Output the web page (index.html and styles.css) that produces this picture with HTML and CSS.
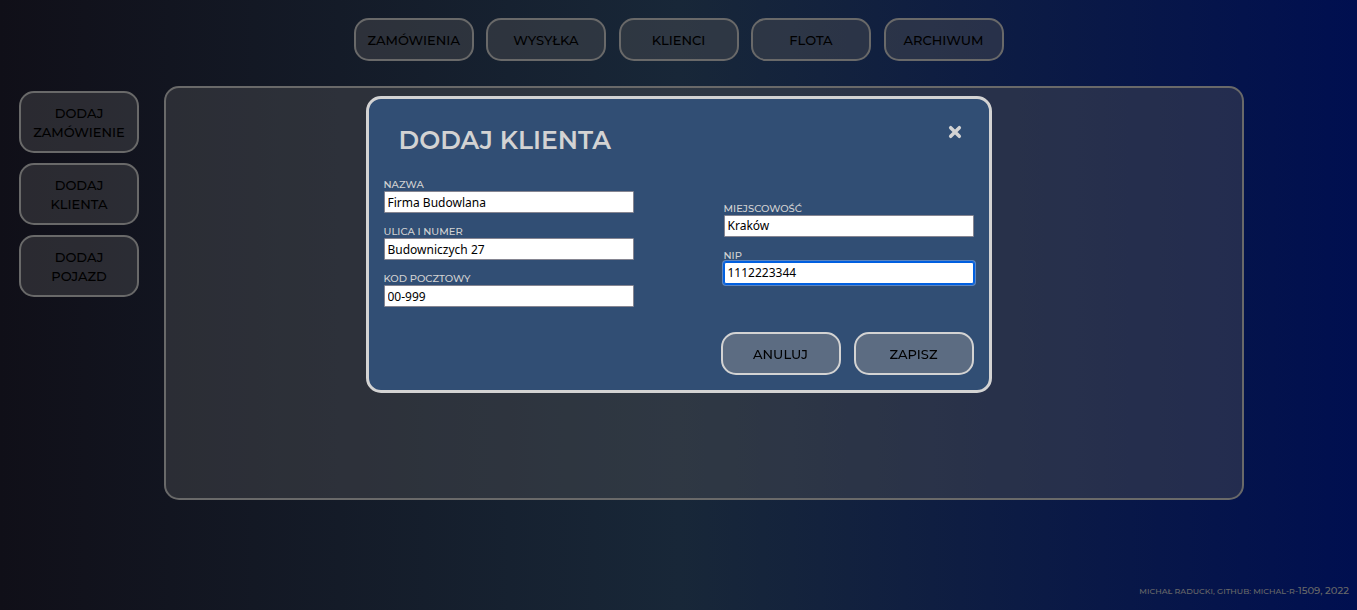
FILE: index.html
```
<!DOCTYPE html>
<html lang="pl">
<head>
  <meta charset="utf-8">
  <meta name="viewport" content="width=device-width, initial-scale=1">
  <title>Dodaj klienta</title>
  <link rel="stylesheet" href="styles.css">
</head>
<body>
  <header class="header">
    <nav class="nav">
      <button class="button button-dim" type="button">ZAMÓWIENIA</button>
      <button class="button button-dim" type="button">WYSYŁKA</button>
      <button class="button button-dim" type="button">KLIENCI</button>
      <button class="button button-dim" type="button">FLOTA</button>
      <button class="button button-dim" type="button">ARCHIWUM</button>
    </nav>
  </header>
  <main class="main">
    <aside class="side">
      <button class="button button-dim" type="button">DODAJ ZAMÓWIENIE</button>
      <button class="button button-dim" type="button">DODAJ KLIENTA</button>
      <button class="button button-dim" type="button">DODAJ POJAZD</button>
    </aside>
    <section class="panel"></section>
  </main>
  <footer class="footer">MICHAŁ RADUCKI, GITHUB: MICHAL-R-<span class="footer-number">1509, 2022</span></footer>

  <div class="modal" role="dialog" aria-labelledby="modal-title">
    <div class="modal-head">
      <h1 class="modal-title" id="modal-title">DODAJ KLIENTA</h1>
      <button class="close" type="button" aria-label="Zamknij">
        <svg class="close-icon" viewBox="0 0 12 12" aria-hidden="true"><path d="M2.3 2.3L9.7 9.7M9.7 2.3L2.3 9.7"/></svg>
      </button>
    </div>
    <form class="form">
      <div class="fields">
        <div class="column">
          <div class="field">
            <label class="label" for="name">NAZWA</label>
            <input class="input" id="name" type="text" value="Firma Budowlana">
          </div>
          <div class="field">
            <label class="label" for="street">ULICA I NUMER</label>
            <input class="input" id="street" type="text" value="Budowniczych 27">
          </div>
          <div class="field">
            <label class="label" for="zip">KOD POCZTOWY</label>
            <input class="input" id="zip" type="text" value="00-999">
          </div>
        </div>
        <div class="column">
          <div class="field">
            <label class="label" for="city">MIEJSCOWOŚĆ</label>
            <input class="input" id="city" type="text" value="Kraków">
          </div>
          <div class="field">
            <label class="label" for="nip">NIP</label>
            <input class="input" id="nip" type="text" value="1112223344" autofocus>
          </div>
        </div>
      </div>
      <div class="actions">
        <button class="button" type="button">ANULUJ</button>
        <button class="button" type="submit">ZAPISZ</button>
      </div>
    </form>
  </div>
</body>
</html>
```
FILE: styles.css
```
* {
  box-sizing: border-box;
}

body {
  margin: 0;
  min-height: 100vh;
  display: flex;
  flex-direction: column;
  font-family: Montserrat, Inter, sans-serif;
  background: linear-gradient(to right, #100f18, #182738 50%, #000f50);
}

.header {
  display: flex;
  justify-content: center;
  padding: 18px 0 25px;
}

.nav {
  width: 650px;
  display: flex;
  justify-content: space-between;
}

.button {
  width: 120px;
  padding: 11px 12px 9px;
  border: 2px solid #d3d3d3;
  border-radius: 15px;
  background: #5c6c82;
  color: #000;
  font-family: inherit;
  font-size: 13px;
  font-weight: 500;
  line-height: 19px;
}

.button-dim {
  border-color: #696969;
  background: rgba(82, 82, 86, 0.4);
}

.main {
  flex: 1;
  display: grid;
  grid-template-columns: 120px 1fr;
  gap: 25px;
  padding: 0 113px 0 19px;
}

.side {
  display: flex;
  flex-direction: column;
  gap: 10px;
  padding-top: 5px;
}

.panel {
  border: 2px solid #696969;
  border-radius: 15px;
  background: rgba(82, 82, 86, 0.4);
}

.footer {
  padding: 82px 8px 10px;
  color: #696969;
  font-size: 8px;
  font-weight: 500;
  line-height: 18px;
  text-align: right;
}

.footer-number {
  font-size: 10px;
}

.modal {
  position: absolute;
  top: 96px;
  left: 50%;
  width: 626px;
  transform: translateX(-50%);
  padding: 15px;
  border: 3px solid #d3d3d3;
  border-radius: 15px;
  background: #314e74;
  color: #d3d3d3;
}

.modal-head {
  display: flex;
  justify-content: space-between;
  padding: 9px 12px 22px 15px;
}

.modal-title {
  margin: 0;
  font-size: 25px;
  font-weight: 600;
  line-height: 34px;
}

.close {
  align-self: flex-start;
  padding: 2px 0;
  border: 0;
  background: none;
}

.close-icon {
  display: block;
  width: 14px;
  height: 14px;
  fill: none;
  stroke: #d3d3d3;
  stroke-width: 3;
  stroke-linecap: round;
}

.fields {
  display: flex;
  justify-content: space-between;
}

.column {
  width: 250px;
  display: flex;
  flex-direction: column;
  justify-content: center;
}

.field {
  display: flex;
  flex-direction: column;
  padding-bottom: 13px;
}

.label {
  font-size: 10px;
  font-weight: 500;
  line-height: 12px;
}

.input {
  width: 100%;
  height: 22px;
  padding: 1px 3px;
  border: 1px solid #858591;
  border-radius: 1px;
  background: #fff;
  color: #000;
  font-family: Tahoma, "Noto Sans", sans-serif;
  font-size: 12px;
}

.input:focus {
  border-color: #005fe0;
  border-radius: 2px;
  outline: 1px solid #005fe0;
  box-shadow: 0 0 0 2px #5c85c0;
}

.actions {
  display: flex;
  justify-content: flex-end;
  gap: 13px;
  padding-top: 12px;
}
```
